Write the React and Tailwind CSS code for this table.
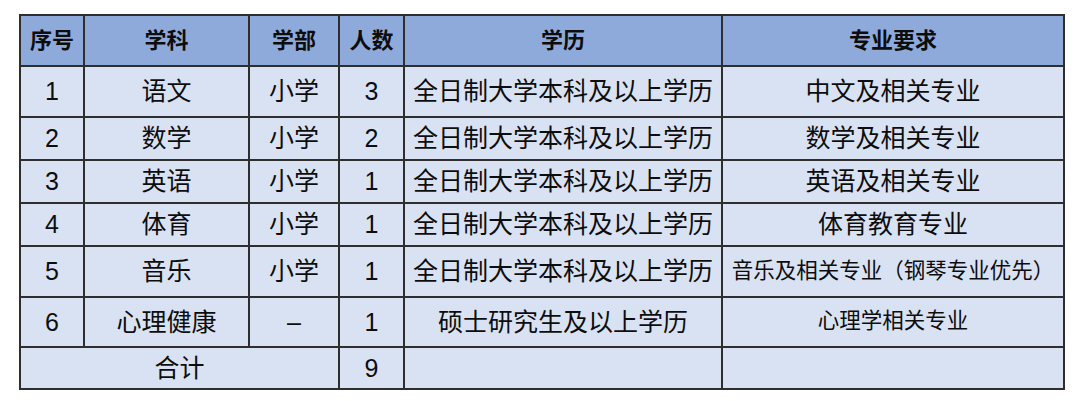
import React from 'react';

const rows = [
  { no: '1', subject: '语文', dept: '小学', count: '3', edu: '全日制大学本科及以上学历', major: '中文及相关专业', h: 'h-[51px]' },
  { no: '2', subject: '数学', dept: '小学', count: '2', edu: '全日制大学本科及以上学历', major: '数学及相关专业', h: 'h-[43px]' },
  { no: '3', subject: '英语', dept: '小学', count: '1', edu: '全日制大学本科及以上学历', major: '英语及相关专业', h: 'h-[43px]' },
  { no: '4', subject: '体育', dept: '小学', count: '1', edu: '全日制大学本科及以上学历', major: '体育教育专业', h: 'h-[43px]' },
  { no: '5', subject: '音乐', dept: '小学', count: '1', edu: '全日制大学本科及以上学历', major: '音乐及相关专业（钢琴专业优先）', small: true, h: 'h-[51px]' },
  { no: '6', subject: '心理健康', dept: '–', count: '1', edu: '硕士研究生及以上学历', major: '心理学相关专业', small: true, h: 'h-[50px]' },
];

const cell = 'border-2 border-[#2e2e2e] text-center align-middle p-0 whitespace-nowrap';

const App = () => {
  return (
    <div className="w-[1080px] h-[401px] bg-white pt-[14px] pl-[19px] font-['Liberation_Sans','Noto_Sans_CJK_SC',sans-serif] text-[#0d0d0d]">
      <table className="table-fixed border-collapse w-[1044px]">
        <colgroup>
          <col className="w-[64px]" />
          <col className="w-[165px]" />
          <col className="w-[90px]" />
          <col className="w-[65px]" />
          <col className="w-[318px]" />
          <col className="w-[342px]" />
        </colgroup>
        <thead>
          <tr className="h-[51px] bg-[#8eaadb] text-[22px] font-bold">
            <th className={cell}>序号</th>
            <th className={cell}>学科</th>
            <th className={cell}>学部</th>
            <th className={cell}>人数</th>
            <th className={cell}>学历</th>
            <th className={cell}>专业要求</th>
          </tr>
        </thead>
        <tbody className="bg-[#d9e2f3] text-[25px] leading-none">
          {rows.map((r) => (
            <tr key={r.no} className={r.h}>
              <td className={cell}>{r.no}</td>
              <td className={cell}>{r.subject}</td>
              <td className={cell}>{r.dept}</td>
              <td className={cell}>{r.count}</td>
              <td className={cell}>{r.edu}</td>
              <td className={`${cell} ${r.small ? 'text-[21.5px]' : ''}`}>{r.major}</td>
            </tr>
          ))}
          <tr className="h-[42px]">
            <td className={cell} colSpan={3}>合计</td>
            <td className={cell}>9</td>
            <td className={cell}></td>
            <td className={cell}></td>
          </tr>
        </tbody>
      </table>
    </div>
  );
};

export default App;
